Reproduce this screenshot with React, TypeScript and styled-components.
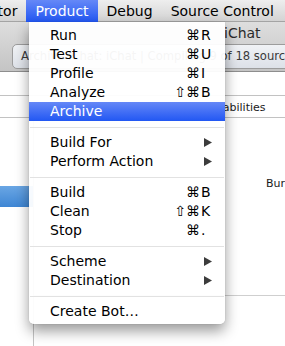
import React from 'react';
import styled, { createGlobalStyle } from 'styled-components';

type MenuEntry =
    | { kind: 'item'; label: string; mods?: string; keyName?: string; submenu?: boolean; active?: boolean }
    | { kind: 'sep' };

const entries: MenuEntry[] = [
    { kind: 'item', label: 'Run', mods: '⌘', keyName: 'R' },
    { kind: 'item', label: 'Test', mods: '⌘', keyName: 'U' },
    { kind: 'item', label: 'Profile', mods: '⌘', keyName: 'I' },
    { kind: 'item', label: 'Analyze', mods: '⇧⌘', keyName: 'B' },
    { kind: 'item', label: 'Archive', active: true },
    { kind: 'sep' },
    { kind: 'item', label: 'Build For', submenu: true },
    { kind: 'item', label: 'Perform Action', submenu: true },
    { kind: 'sep' },
    { kind: 'item', label: 'Build', mods: '⌘', keyName: 'B' },
    { kind: 'item', label: 'Clean', mods: '⇧⌘', keyName: 'K' },
    { kind: 'item', label: 'Stop', mods: '⌘', keyName: '.' },
    { kind: 'sep' },
    { kind: 'item', label: 'Scheme', submenu: true },
    { kind: 'item', label: 'Destination', submenu: true },
    { kind: 'sep' },
    { kind: 'item', label: 'Create Bot…' },
];

const tabs = ['General', 'Capabilities', 'Info', 'Build Settings'];

function App() {
    return (
        <>
            <GlobalStyle />
            <Screen>
                <MenuBar>
                    <MenuTitle $offset={-33}>Editor</MenuTitle>
                    <MenuTitle $active>Product</MenuTitle>
                    <MenuTitle>Debug</MenuTitle>
                    <MenuTitle>Source Control</MenuTitle>
                </MenuBar>

                <Toolbar>
                    <WindowTitle>iChat</WindowTitle>
                    <Activity>Archive iChat: iChat | Compiling 9 of 18 sources</Activity>
                </Toolbar>
                <JumpBar />
                <TabBar>
                    {tabs.map((t) => (
                        <Tab key={t}>{t}</Tab>
                    ))}
                </TabBar>

                <Body>
                    <Sidebar>
                        <SidebarRow />
                        <SidebarRow $selected />
                    </Sidebar>
                    <Main>
                        <Setting>Burst Mode</Setting>
                        <Section />
                    </Main>
                </Body>

                {/* dropdown lies over the window */}
                <Menu>
                    {entries.map((e, i) =>
                        e.kind === 'sep' ? (
                            <Separator key={i} />
                        ) : (
                            <Item key={i} $active={e.active}>
                                <Label>{e.label}</Label>
                                {e.keyName && (
                                    <Shortcut>
                                        <Mods>{e.mods}</Mods>
                                        <Key>{e.keyName}</Key>
                                    </Shortcut>
                                )}
                                {e.submenu && (
                                    <Arrow width="8" height="9" viewBox="0 0 8 9">
                                        <polygon points="0,0 8,4.5 0,9" fill="#3c3c3c" />
                                    </Arrow>
                                )}
                            </Item>
                        )
                    )}
                </Menu>
            </Screen>
        </>
    );
}

const GlobalStyle = createGlobalStyle`
    body {
        margin: 0;
        background: #fff;
        overflow: hidden;
        font-family: "DejaVu Sans", "Liberation Sans", sans-serif;
    }
`;

const Screen = styled.div`
    position: relative;
    width: 285px;
    height: 346px;
    overflow: hidden;
    background: #fff;
`;

const MenuBar = styled.div`
    display: flex;
    height: 21px;
    border-bottom: 1px solid #a4a4a4;
    background: linear-gradient(#eeeeee, #d3d3d3);
    white-space: nowrap;
`;

const MenuTitle = styled.div<{ $active?: boolean; $offset?: number }>`
    flex: none;
    padding: 0 9px;
    margin-left: ${(p) => p.$offset ?? 0}px;
    height: 22px;
    line-height: 22px;
    font-size: 14px;
    color: ${(p) => (p.$active ? '#fff' : '#000')};
    background: ${(p) => (p.$active ? 'linear-gradient(#6588f7, #2257f3)' : 'transparent')};
`;

const Toolbar = styled.div`
    display: flex;
    flex-direction: column;
    height: 49px;
    border-bottom: 1px solid #8e8e8e;
    background: linear-gradient(#dedede, #c4c4c4);
    white-space: nowrap;
`;

const WindowTitle = styled.div`
    height: 22px;
    line-height: 22px;
    padding-left: 224px;
    font-size: 14px;
    color: #2a2a2a;
`;

const Activity = styled.div`
    height: 23px;
    line-height: 23px;
    margin-left: 12px;
    width: 340px;
    padding-left: 8px;
    border: 1px solid #9c9c9c;
    border-radius: 5px;
    background: linear-gradient(#f0f2f5, #dde1e8);
    font-size: 11.6px;
    color: #3a3a3a;
`;

const JumpBar = styled.div`
    height: 23px;
    border-bottom: 1px solid #c2c2c2;
`;

const TabBar = styled.div`
    display: flex;
    gap: 20px;
    height: 21px;
    padding-left: 138px;
    border-bottom: 1px solid #c2c2c2;
    white-space: nowrap;
`;

const Tab = styled.div`
    line-height: 23px;
    font-size: 11px;
    color: #1a1a1a;
`;

const Body = styled.div`
    display: flex;
    height: 228px;
`;

const Sidebar = styled.div`
    flex: none;
    width: 33px;
    padding-top: 46px;
    border-right: 1px solid #c4c4c4;
    display: flex;
    flex-direction: column;
`;

const SidebarRow = styled.div<{ $selected?: boolean }>`
    height: ${(p) => (p.$selected ? 21 : 22)}px;
    background: ${(p) => (p.$selected ? 'linear-gradient(#6aa6e4, #3e86d4)' : 'transparent')};
`;

const Main = styled.div`
    flex: 1;
    min-width: 0;
    overflow: hidden;
    display: flex;
    flex-direction: column;
    padding-top: 59px;
`;

const Setting = styled.div`
    padding-left: 232px;
    height: 14px;
    line-height: 14px;
    font-size: 11px;
    color: #1a1a1a;
    white-space: nowrap;
`;

const Section = styled.div`
    margin-top: 104px;
    border-top: 1px solid #cfcfcf;
`;

const Menu = styled.div`
    position: absolute;
    left: 29px;
    top: 22px;
    width: 196px;
    padding: 4px 0 3px;
    background: rgba(255, 255, 255, 0.95);
    border-radius: 0 0 5px 5px;
    box-shadow: 0 7px 14px rgba(0, 0, 0, 0.4), 0 0 1px rgba(0, 0, 0, 0.3);
`;

const Item = styled.div<{ $active?: boolean }>`
    display: flex;
    align-items: center;
    height: 19px;
    padding: 0 13px 0 21px;
    font-size: 14px;
    color: ${(p) => (p.$active ? '#fff' : '#000')};
    background: ${(p) => (p.$active ? 'linear-gradient(#6588f7, #2257f3)' : 'transparent')};
`;

const Label = styled.span`
    flex: 1;
    line-height: 19px;
    white-space: nowrap;
`;

const Shortcut = styled.span`
    display: flex;
    line-height: 19px;
`;

const Mods = styled.span`
    text-align: right;
`;

const Key = styled.span`
    width: 11px;
    padding-left: 1px;
`;

const Arrow = styled.svg`
    display: block;
`;

const Separator = styled.div`
    height: 12px;
    display: flex;
    align-items: center;

    &::after {
        content: '';
        flex: 1;
        margin: 0 1px;
        border-top: 1px solid #e2e2e2;
    }
`;

export default App;
